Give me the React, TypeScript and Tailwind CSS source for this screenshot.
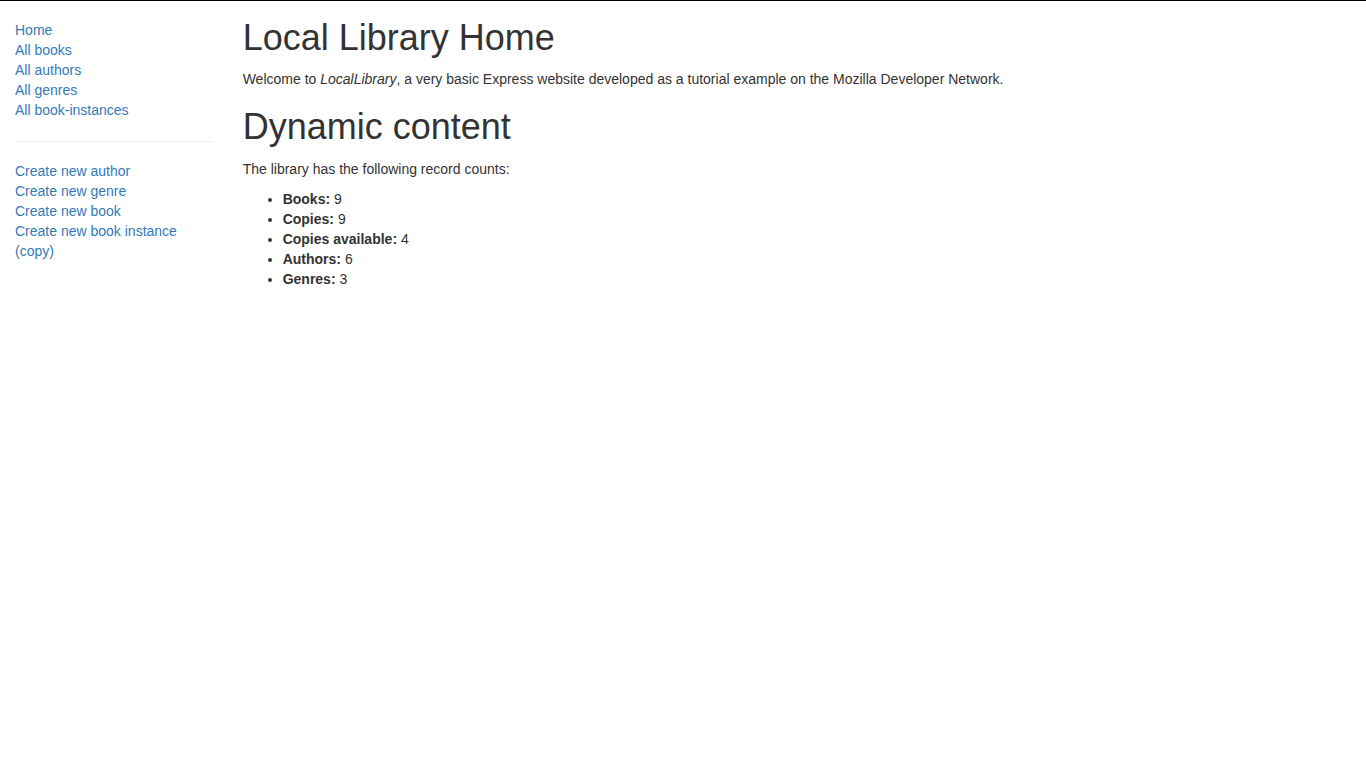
const navLinks = ["Home", "All books", "All authors", "All genres", "All book-instances"];
const createLinks = ["Create new author", "Create new genre", "Create new book", "Create new book instance (copy)"];

const counts: [string, number][] = [
  ["Books", 9],
  ["Copies", 9],
  ["Copies available", 4],
  ["Authors", 6],
  ["Genres", 3],
];

export default function App() {
  return (
    <div className="min-h-[768px] border-t border-black bg-white font-['Liberation_Sans',Arial,sans-serif] text-[14px] leading-[20px] text-[#333]">
      <div className="flex">
        {/* Sidebar */}
        <div className="w-[16.6667%] shrink-0 px-[15px] pt-[19px]">
          <ul>
            {navLinks.map((l) => (
              <li key={l}>
                <a href="#" className="text-[#337ab7]">{l}</a>
              </li>
            ))}
          </ul>
          <hr className="mt-[21px] mb-[19px] border-t border-[#eee]" />
          <ul>
            {createLinks.map((l) => (
              <li key={l}>
                <a href="#" className="text-[#337ab7]">{l}</a>
              </li>
            ))}
          </ul>
        </div>

        {/* Main */}
        <div className="flex-1 px-[15px]">
          <h1 className="mt-[17px] mb-[11px] text-[36px] leading-[1.1] font-normal">Local Library Home</h1>
          <p className="mb-[10px]">
            Welcome to <em>LocalLibrary</em>, a very basic Express website developed as a tutorial example on the Mozilla Developer Network.
          </p>
          <h1 className="mt-[18px] mb-[13px] text-[36px] leading-[1.1] font-normal">Dynamic content</h1>
          <p className="mb-[10px]">The library has the following record counts:</p>
          <ul className="list-disc pl-10">
            {counts.map(([k, v]) => (
              <li key={k}>
                <strong>{k}:</strong> {v}
              </li>
            ))}
          </ul>
        </div>
      </div>
    </div>
  );
}
